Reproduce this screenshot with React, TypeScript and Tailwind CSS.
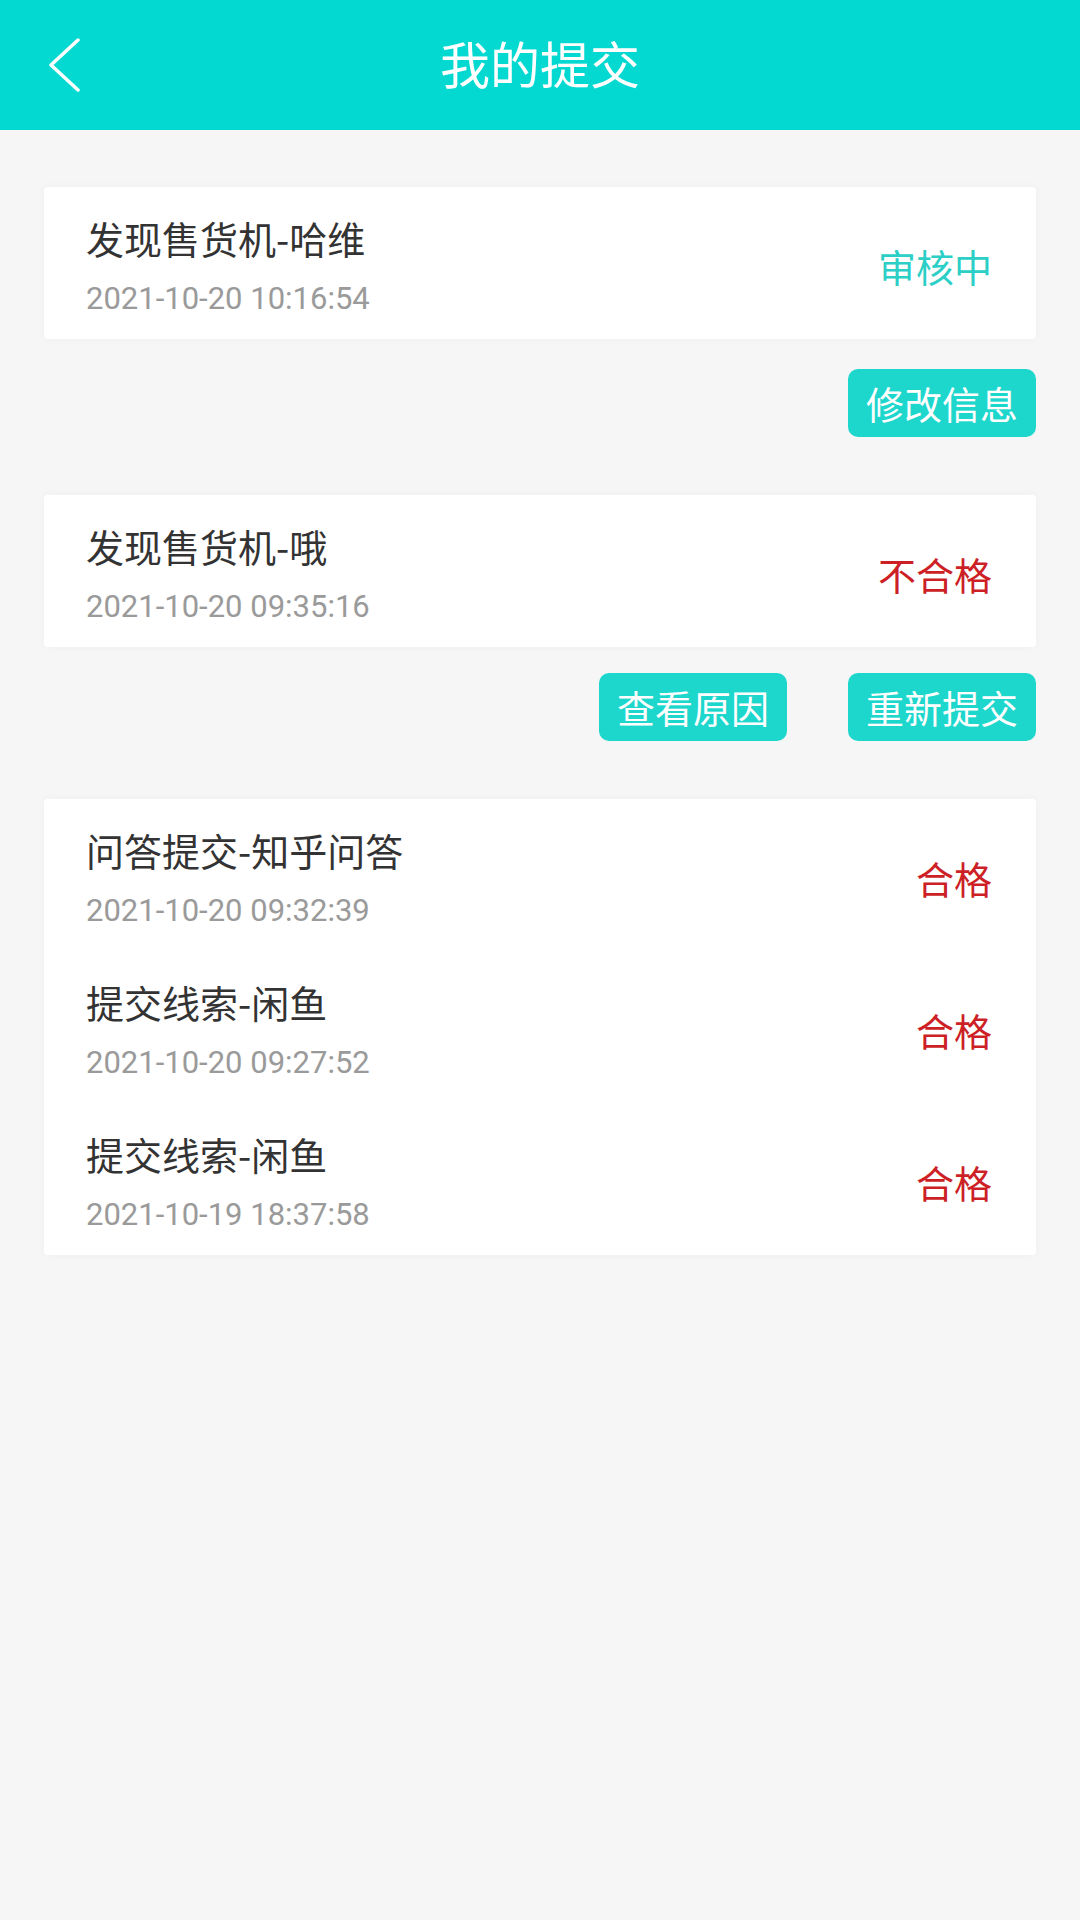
type Status = "pending" | "failed" | "passed";

interface Submission {
	title: string;
	time: string;
	status: Status;
}

const statusText: Record<Status, string> = {
	pending: "审核中",
	failed: "不合格",
	passed: "合格",
};

const statusColor: Record<Status, string> = {
	pending: "text-[#2bcfc6]",
	failed: "text-[#cc1f26]",
	passed: "text-[#cc1f26]",
};

const cjk = "font-['Noto_Sans_CJK_SC',sans-serif]";

function Row({ item }: { item: Submission }) {
	return (
		<div className="flex h-[152px] items-start justify-between pl-[42px] pr-[44px]">
			<div className="flex flex-col pt-[28px]">
				<div className={`${cjk} text-[38px] leading-[46px] text-[#333333]`}>{item.title}</div>
				<div className="mt-[18px] font-['Roboto',sans-serif] text-[31px] leading-[40px] text-[#9a9a9a]">
					{item.time}
				</div>
			</div>
			<div className={`${cjk} self-center pt-[6px] text-[38px] leading-[46px] ${statusColor[item.status]}`}>
				{statusText[item.status]}
			</div>
		</div>
	);
}

function Card({ items }: { items: Submission[] }) {
	return (
		<div className="rounded-[4px] bg-white shadow-[0_0_10px_rgba(0,0,0,0.03)]">
			{items.map((item, i) => (
				<Row key={i} item={item} />
			))}
		</div>
	);
}

function ActionButton({ label }: { label: string }) {
	return (
		<button
			className={`${cjk} flex h-[68px] w-[188px] items-center justify-center rounded-[10px] bg-[#1dd6cc] text-[38px] leading-none text-white`}
		>
			{label}
		</button>
	);
}

export default function App() {
	return (
		<div className="min-h-[1920px] w-[1080px] bg-[#f6f6f7]">
			<header className="flex h-[130px] items-center bg-[#03d9d1]">
				<div className="flex w-[140px] items-center pl-[47px]">
					<svg width="34" height="54" viewBox="0 0 34 54" fill="none">
						<polyline
							points="31,2 4,27 31,52"
							stroke="white"
							strokeWidth="3.5"
							strokeLinecap="round"
							strokeLinejoin="round"
						/>
					</svg>
				</div>
				<h1 className={`${cjk} flex-1 pb-[6px] text-center text-[50px] font-normal leading-none text-white`}>
					我的提交
				</h1>
				<div className="w-[140px]" />
			</header>

			<main className="flex flex-col px-[44px] pt-[57px]">
				<Card items={[{ title: "发现售货机-哈维", time: "2021-10-20 10:16:54", status: "pending" }]} />
				<div className="mt-[30px] flex justify-end gap-[61px]">
					<ActionButton label="修改信息" />
				</div>

				<div className="mt-[58px]">
					<Card items={[{ title: "发现售货机-哦", time: "2021-10-20 09:35:16", status: "failed" }]} />
				</div>
				<div className="mt-[26px] flex justify-end gap-[61px]">
					<ActionButton label="查看原因" />
					<ActionButton label="重新提交" />
				</div>

				<div className="mt-[58px]">
					<Card
						items={[
							{ title: "问答提交-知乎问答", time: "2021-10-20 09:32:39", status: "passed" },
							{ title: "提交线索-闲鱼", time: "2021-10-20 09:27:52", status: "passed" },
							{ title: "提交线索-闲鱼", time: "2021-10-19 18:37:58", status: "passed" },
						]}
					/>
				</div>
			</main>
		</div>
	);
}
